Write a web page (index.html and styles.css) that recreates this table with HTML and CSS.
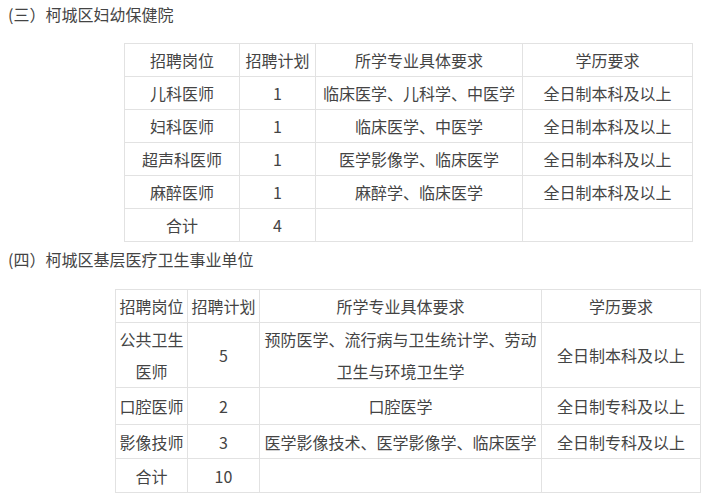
FILE: index.html
```html
<!DOCTYPE html>
<html lang="zh-CN">
<head>
<meta charset="utf-8">
<title>招聘岗位</title>
<link rel="stylesheet" href="styles.css">
</head>
<body>
<p class="heading">(三）柯城区妇幼保健院</p>
<table class="tbl tbl-a">
  <colgroup>
    <col class="a1"><col class="a2"><col class="a3"><col class="a4">
  </colgroup>
  <tr><td>招聘岗位</td><td>招聘计划</td><td>所学专业具体要求</td><td>学历要求</td></tr>
  <tr><td>儿科医师</td><td>1</td><td>临床医学、儿科学、中医学</td><td>全日制本科及以上</td></tr>
  <tr><td>妇科医师</td><td>1</td><td>临床医学、中医学</td><td>全日制本科及以上</td></tr>
  <tr><td>超声科医师</td><td>1</td><td>医学影像学、临床医学</td><td>全日制本科及以上</td></tr>
  <tr><td>麻醉医师</td><td>1</td><td>麻醉学、临床医学</td><td>全日制本科及以上</td></tr>
  <tr><td>合计</td><td>4</td><td></td><td></td></tr>
</table>
<p class="heading heading-2">(四）柯城区基层医疗卫生事业单位</p>
<table class="tbl tbl-b">
  <colgroup>
    <col class="b1"><col class="b2"><col class="b3"><col class="b4">
  </colgroup>
  <tr><td>招聘岗位</td><td>招聘计划</td><td>所学专业具体要求</td><td>学历要求</td></tr>
  <tr><td>公共卫生医师</td><td>5</td><td>预防医学、流行病与卫生统计学、劳动卫生与环境卫生学</td><td>全日制本科及以上</td></tr>
  <tr class="row-tall"><td>口腔医师</td><td>2</td><td>口腔医学</td><td>全日制专科及以上</td></tr>
  <tr class="row-mid"><td>影像技师</td><td>3</td><td>医学影像技术、医学影像学、临床医学</td><td>全日制专科及以上</td></tr>
  <tr class="row-mid"><td>合计</td><td>10</td><td></td><td></td></tr>
</table>
</body>
</html>
```

FILE: styles.css
```css
html, body {
  margin: 0;
  padding: 0;
  background: #ffffff;
}
body {
  padding: 0 8px;
  font-family: "Noto Sans CJK SC", "Noto Sans", sans-serif;
  font-size: 16px;
  color: #444444;
}
.heading {
  margin: 0 0 15px 0;
  line-height: 28px;
}
.heading-2 {
  margin-top: 3px;
  margin-bottom: 16px;
}
.tbl {
  border-collapse: collapse;
  table-layout: fixed;
}
.tbl td {
  border: 1px solid #e2e2e2;
  padding: 0 3px;
  line-height: 32px;
  text-align: center;
  vertical-align: middle;
}
.tbl-a {
  width: 568px;
  margin-left: 116px;
}
.a1 { width: 115px; }
.a2 { width: 76px; }
.a3 { width: 207px; }
.a4 { width: 170px; }
.tbl-b {
  width: 585px;
  margin-left: 107px;
}
.b1 { width: 72px; }
.b2 { width: 72px; }
.b3 { width: 282px; }
.b4 { width: 159px; }
.row-tall td {
  height: 36px;
}
.row-mid td {
  height: 33px;
}
```
